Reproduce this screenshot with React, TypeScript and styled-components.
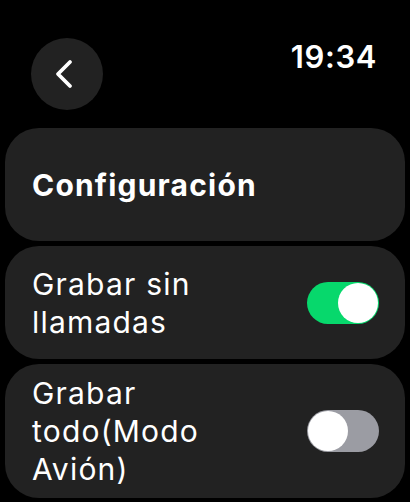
import styled, { createGlobalStyle } from "styled-components";

const GlobalStyle = createGlobalStyle`
  html, body {
    margin: 0;
    padding: 0;
    background: #000;
  }
  body {
    font-family: Inter, "Noto Sans", sans-serif;
    color: #fff;
  }
`;

const Screen = styled.div`
  width: 410px;
  height: 502px;
  background: #000;
  overflow: hidden;
  display: flex;
  flex-direction: column;
`;

const Header = styled.header`
  display: flex;
  justify-content: space-between;
  align-items: flex-start;
  padding: 38px 33px 0 31px;
  height: 72px;
`;

const BackButton = styled.button`
  width: 72px;
  height: 72px;
  border-radius: 50%;
  border: none;
  background: #222222;
  display: flex;
  align-items: center;
  justify-content: center;
  padding: 0 4px 0 0;
  cursor: pointer;
`;

const Clock = styled.div`
  font-size: 31px;
  font-weight: 600;
  line-height: 36px;
  margin-top: 1px;
  letter-spacing: 0.6px;
`;

const List = styled.div`
  display: flex;
  flex-direction: column;
  gap: 5px;
  padding: 18px 5px 0;
`;

const Card = styled.div<{ $height: number }>`
  min-height: ${(p) => p.$height}px;
  box-sizing: border-box;
  background: #222222;
  border-radius: 34px;
  padding: 0 26px 0 27px;
  display: flex;
  align-items: center;
  justify-content: space-between;
`;

const Title = styled.div`
  font-size: 30px;
  font-weight: 700;
  line-height: 38px;
  letter-spacing: 1.2px;
`;

const Label = styled.div`
  font-size: 30px;
  font-weight: 400;
  line-height: 38px;
  max-width: 235px;
  letter-spacing: 1.2px;
`;

const Switch = styled.div<{ $on: boolean }>`
  width: 72px;
  height: 42px;
  border-radius: 21px;
  background: ${(p) => (p.$on ? "#07d86c" : "#9b9ca3")};
  display: flex;
  align-items: center;
  justify-content: ${(p) => (p.$on ? "flex-end" : "flex-start")};
  padding: 0 1px;
  box-sizing: border-box;
  flex-shrink: 0;
`;

const Knob = styled.div`
  width: 40px;
  height: 40px;
  border-radius: 50%;
  background: #fff;
`;

function Chevron() {
  return (
    <svg width="24" height="32" viewBox="0 0 24 32">
      <path
        d="M17 4 L5 16 L17 28"
        fill="none"
        stroke="#fff"
        strokeWidth="3.8"
        strokeLinecap="round"
        strokeLinejoin="round"
      />
    </svg>
  );
}

export default function App() {
  return (
    <Screen>
      <GlobalStyle />
      <Header>
        <BackButton aria-label="Atrás">
          <Chevron />
        </BackButton>
        <Clock>19:34</Clock>
      </Header>
      <List>
        <Card $height={113}>
          <Title>Configuración</Title>
        </Card>
        <Card $height={113}>
          <Label>Grabar sin llamadas</Label>
          <Switch $on={true}>
            <Knob />
          </Switch>
        </Card>
        <Card $height={134}>
          <Label>Grabar todo(Modo Avión)</Label>
          <Switch $on={false}>
            <Knob />
          </Switch>
        </Card>
      </List>
    </Screen>
  );
}
